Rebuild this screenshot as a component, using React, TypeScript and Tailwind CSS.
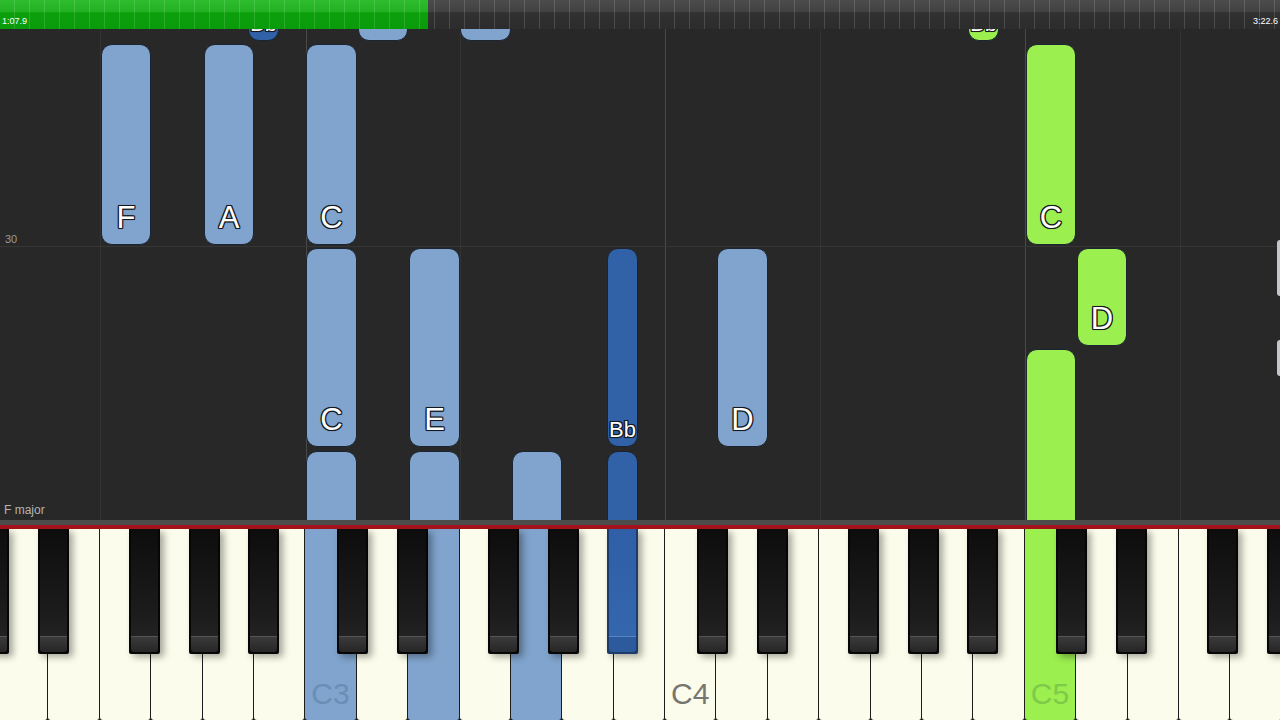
import React from 'react';

type Note = { x: number; y: number; w: number; h: number; label?: string; color: 'light' | 'dark' | 'green'; small?: boolean };

// piano roll notes, page coords (y measured from top of the page)
const notes: Note[] = [
  { x: 248, y: -20, w: 31, h: 61, label: 'Bb', color: 'dark', small: true },
  { x: 358, y: -20, w: 50, h: 61, color: 'light' },
  { x: 460, y: -20, w: 51, h: 61, color: 'light' },
  { x: 968, y: -20, w: 31, h: 61, label: 'Bb', color: 'green', small: true },
  { x: 101, y: 44, w: 50, h: 201, label: 'F', color: 'light' },
  { x: 204, y: 44, w: 50, h: 201, label: 'A', color: 'light' },
  { x: 306, y: 44, w: 51, h: 201, label: 'C', color: 'light' },
  { x: 1026, y: 44, w: 50, h: 201, label: 'C', color: 'green' },
  { x: 306, y: 248, w: 51, h: 199, label: 'C', color: 'light' },
  { x: 409, y: 248, w: 51, h: 199, label: 'E', color: 'light' },
  { x: 607, y: 248, w: 31, h: 199, label: 'Bb', color: 'dark', small: true },
  { x: 717, y: 248, w: 51, h: 199, label: 'D', color: 'light' },
  { x: 1077, y: 248, w: 50, h: 98, label: 'D', color: 'green' },
  { x: 1026, y: 349, w: 50, h: 220, color: 'green' },
  { x: 306, y: 451, w: 51, h: 120, color: 'light' },
  { x: 409, y: 451, w: 51, h: 120, color: 'light' },
  { x: 512, y: 451, w: 50, h: 120, color: 'light' },
  { x: 607, y: 451, w: 31, h: 120, color: 'dark' },
];

const noteColors = {
  light: 'bg-[#80a4cd]',
  dark: 'bg-[#3161a6]',
  green: 'bg-[#9bef4f]',
};

const gridLines = [
  { x: 100, strong: false },
  { x: 306, strong: true },
  { x: 460, strong: false },
  { x: 665, strong: true },
  { x: 820, strong: false },
  { x: 1025, strong: true },
  { x: 1180, strong: false },
];

const whiteNames = ['D2', 'E2', 'F2', 'G2', 'A2', 'B2', 'C3', 'D3', 'E3', 'F3', 'G3', 'A3', 'B3', 'C4', 'D4', 'E4', 'F4', 'G4', 'A4', 'B4', 'C5', 'D5', 'E5', 'F5', 'G5'];

const whiteHi: Record<string, { bg: string; text: string }> = {
  C3: { bg: 'bg-[#80a4cd]', text: 'text-[#6b8db6]' },
  E3: { bg: 'bg-[#80a4cd]', text: 'text-[#6b8db6]' },
  G3: { bg: 'bg-[#80a4cd]', text: 'text-[#6b8db6]' },
  C5: { bg: 'bg-[#9bef4f]', text: 'text-[#7fc94a]' },
};

const octaveStarts = [-53.5, 306, 665.5, 1025];
const blackOffsets = [31, 91, 182, 242, 301];
const blackKeys = octaveStarts.flatMap((c, oi) =>
  blackOffsets.map((o, bi) => ({ left: c + o, hi: oi === 1 && bi === 4 }))
);

const outline =
  '[text-shadow:0_0_2px_#15191f,1px_1px_0_#15191f,-1px_-1px_0_#15191f,1px_-1px_0_#15191f,-1px_1px_0_#15191f,0_1px_0_#15191f,0_-1px_0_#15191f,1px_0_0_#15191f,-1px_0_0_#15191f]';

const TopBar = () => (
  <div className="relative flex h-[29px] shrink-0">
    <div className="w-[428px] bg-[linear-gradient(#2fbd2f_0%,#22b122_40%,#0c9f0c_44%,#0a9b0a_100%)]" />
    <div className="flex-1 bg-[linear-gradient(#4b4b4b_0%,#424242_40%,#313131_44%,#2c2c2c_100%)]" />
    <div className="absolute inset-0 bg-[repeating-linear-gradient(90deg,transparent_0_14px,rgba(255,255,255,0.14)_14px_15px)]" />
    <span className="absolute left-[2px] top-[17px] text-[9px] leading-none text-white">1:07.9</span>
    <span className="absolute left-[1253px] top-[17px] text-[9px] leading-none text-white">3:22.6</span>
  </div>
);

const NoteArea = () => (
  <div className="relative h-[491px] shrink-0 overflow-hidden bg-[#282828]">
    {gridLines.map((g) => (
      <div
        key={g.x}
        className={`absolute top-0 bottom-0 w-px ${g.strong ? 'bg-[#4a4a4a]' : 'bg-[#333333]'}`}
        style={{ left: g.x }}
      />
    ))}
    <div className="absolute left-0 right-0 top-[217px] h-px bg-[#363636]" />
    <span className="absolute left-[5px] top-[202px] text-[11px] text-[#9a9a9a]">30</span>
    <span className="absolute left-[4px] top-[472px] text-[12px] text-[#b4b4b4]">F major</span>

    {notes.map((n, i) => (
      <div
        key={i}
        className={`absolute flex items-end justify-center rounded-[11px] border border-[#1b2430] ${noteColors[n.color]}`}
        style={{ left: n.x, top: n.y - 29, width: n.w, height: n.h }}
      >
        {n.label && (
          <span
            className={`${outline} leading-none text-white ${n.small ? 'mb-[5px] text-[22px]' : 'mb-[11px] text-[31px]'}`}
          >
            {n.label}
          </span>
        )}
      </div>
    ))}

    <div className="absolute right-0 top-[211px] h-[56px] w-[3px] rounded-l-sm bg-[#c9c4cc]" />
    <div className="absolute right-0 top-[311px] h-[36px] w-[3px] rounded-l-sm bg-[#c9c4cc]" />
  </div>
);

const Keyboard = () => (
  <div className="relative flex-1 overflow-hidden bg-[#1a1a1a]">
    <div className="ml-[-3px] flex h-full">
      {whiteNames.map((name) => {
        const hi = whiteHi[name];
        const showLabel = name.startsWith('C');
        return (
          <div
            key={name}
            className={`flex h-full w-[51.4px] shrink-0 items-end justify-center rounded-b-[3px] border-r-[1.5px] border-[#1c1c1c] pb-[11px] ${hi ? hi.bg : 'bg-[#fcfcec]'}`}
          >
            {showLabel && (
              <span className={`text-[30px] leading-none ${hi ? hi.text : 'text-[#77776f]'}`}>{name}</span>
            )}
          </div>
        );
      })}
    </div>
    {blackKeys.map((b, i) => (
      <div
        key={i}
        className={`absolute top-0 flex h-[125px] w-[31px] flex-col rounded-b-[2px] p-[2px] pt-0 shadow-[4px_3px_7px_rgba(0,0,0,0.35)] ${b.hi ? 'bg-[#1d3c6a]' : 'bg-[#060606]'}`}
        style={{ left: b.left }}
      >
        <div
          className={`flex-1 ${b.hi ? 'bg-[linear-gradient(#2f5fa6,#3466ae)]' : 'bg-[linear-gradient(#0d0d0d,#1c1c1c_80%,#222222)]'}`}
        />
        <div
          className={`h-[16px] rounded-b-[3px] border-t ${b.hi ? 'border-[#5a84c2] bg-[#2c5a9c]' : 'border-[#555555] bg-[linear-gradient(#3a3a3a,#262626)]'}`}
        />
      </div>
    ))}
  </div>
);

export default function App() {
  return (
    <div className="flex h-[720px] w-[1280px] flex-col overflow-hidden bg-[#282828] font-['Liberation_Sans',Arial,sans-serif]">
      <TopBar />
      <NoteArea />
      <div className="h-[5px] shrink-0 bg-[#4c4c4c]" />
      <div className="h-[4px] shrink-0 bg-[#a3111a]" />
      <Keyboard />
    </div>
  );
}
